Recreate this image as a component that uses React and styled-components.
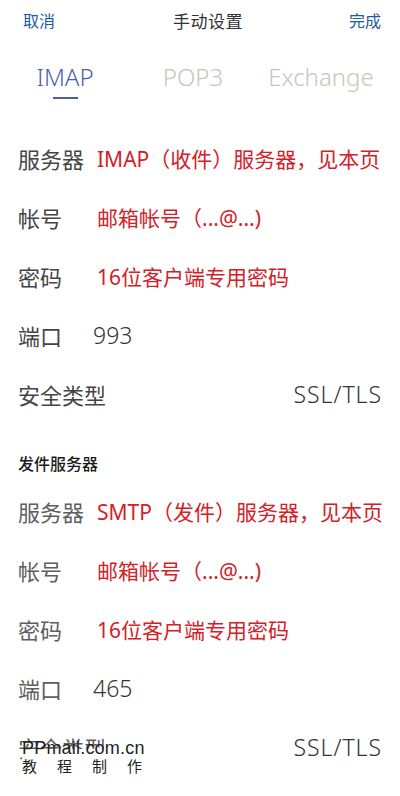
import React from 'react';
import styled, { createGlobalStyle } from 'styled-components';

const GlobalStyle = createGlobalStyle`
  body {
    margin: 0;
    background: #ffffff;
    font-family: "Noto Sans", "Noto Sans CJK SC", sans-serif;
  }
`;

const Page = styled.div`
  position: relative;
  width: 400px;
  min-height: 796px;
  background: #ffffff;
  overflow: hidden;
`;

const Header = styled.div`
  display: grid;
  grid-template-columns: 1fr auto 1fr;
  align-items: center;
  height: 40px;
  padding: 0 19px 0 23px;
`;

const HeaderButton = styled.span`
  font-size: 16px;
  color: #1f5a9c;
  justify-self: ${(props) => (props.right ? 'end' : 'start')};
`;

const HeaderTitle = styled.span`
  font-size: 17px;
  color: #333333;
  letter-spacing: 0.5px;
  margin-left: 12px;
`;

const Tabs = styled.div`
  display: grid;
  grid-template-columns: repeat(3, 128px);
  padding: 22px 0 29px 1px;
`;

const Tab = styled.div`
  display: flex;
  flex-direction: column;
  align-items: center;
  font-size: 24px;
  font-weight: 300;
  line-height: 30px;
  color: ${(props) => (props.active ? '#4d5fab' : '#cbc4bd')};

  &::after {
    content: '';
    display: block;
    width: 25px;
    height: 2px;
    margin-top: 5px;
    background: ${(props) => (props.active ? '#4d5fab' : 'transparent')};
  }
`;

const Row = styled.div`
  display: flex;
  align-items: center;
  height: 59px;
  padding: 0 18px;
`;

const Label = styled.span`
  min-width: 79px;
  flex-shrink: 0;
  white-space: nowrap;
  font-size: 22px;
  color: ${(props) => (props.faded ? '#5e5e5e' : '#454545')};
`;

const Value = styled.span`
  font-size: ${(props) => (props.plain ? '23px' : '21px')};
  font-weight: ${(props) => (props.plain ? 300 : 400)};
  color: ${(props) => (props.plain ? '#333333' : '#d42027')};
  margin-left: ${(props) => (props.shift ? '-4px' : '0')};
  white-space: nowrap;
`;

const RightValue = styled.span`
  margin-left: auto;
  font-size: 23px;
  font-weight: 300;
  color: #333333;
  letter-spacing: 1px;
`;

const SectionTitle = styled.div`
  padding: 30px 18px 6px;
  font-size: 16px;
  line-height: 22px;
  font-weight: 500;
  color: #1a1a1a;
`;

/* site stamp laid over the last row; its upper edge lets the label show through */
const Watermark = styled.div`
  position: absolute;
  left: 22px;
  top: 738px;
  width: 128px;
  background: linear-gradient(to bottom, transparent 0 11px, #ffffff 11px);
  color: #222222;
  white-space: nowrap;
  font-family: "Liberation Sans", "Noto Sans CJK SC", sans-serif;
`;

const MarkSite = styled.div`
  font-size: 18px;
  line-height: 20px;
  letter-spacing: 0.2px;
`;

const MarkNote = styled.div`
  font-size: 15px;
  line-height: 17px;
  letter-spacing: 20px;
`;

const sections = [
  { server: 'IMAP（收件）服务器，见本页', port: '993' },
  { server: 'SMTP（发件）服务器，见本页', port: '465' },
];

function ServerRows({ server, port, faded }) {
  return (
    <>
      <Row>
        <Label faded={faded}>服务器</Label>
        <Value>{server}</Value>
      </Row>
      <Row>
        <Label faded={faded}>帐号</Label>
        <Value>邮箱帐号（...@...)</Value>
      </Row>
      <Row>
        <Label faded={faded}>密码</Label>
        <Value>16位客户端专用密码</Value>
      </Row>
      <Row>
        <Label faded={faded}>端口</Label>
        <Value plain shift>
          {port}
        </Value>
      </Row>
      <Row>
        <Label faded={faded}>安全类型</Label>
        <RightValue>SSL/TLS</RightValue>
      </Row>
    </>
  );
}

export default function App() {
  return (
    <Page>
      <GlobalStyle />
      <Header>
        <HeaderButton>取消</HeaderButton>
        <HeaderTitle>手动设置</HeaderTitle>
        <HeaderButton right>完成</HeaderButton>
      </Header>
      <Tabs>
        <Tab active>IMAP</Tab>
        <Tab>POP3</Tab>
        <Tab>Exchange</Tab>
      </Tabs>
      <ServerRows {...sections[0]} />
      <SectionTitle>发件服务器</SectionTitle>
      <ServerRows {...sections[1]} faded />
      <Watermark>
        <MarkSite>PPmail.com.cn</MarkSite>
        <MarkNote>教程制作</MarkNote>
      </Watermark>
    </Page>
  );
}
